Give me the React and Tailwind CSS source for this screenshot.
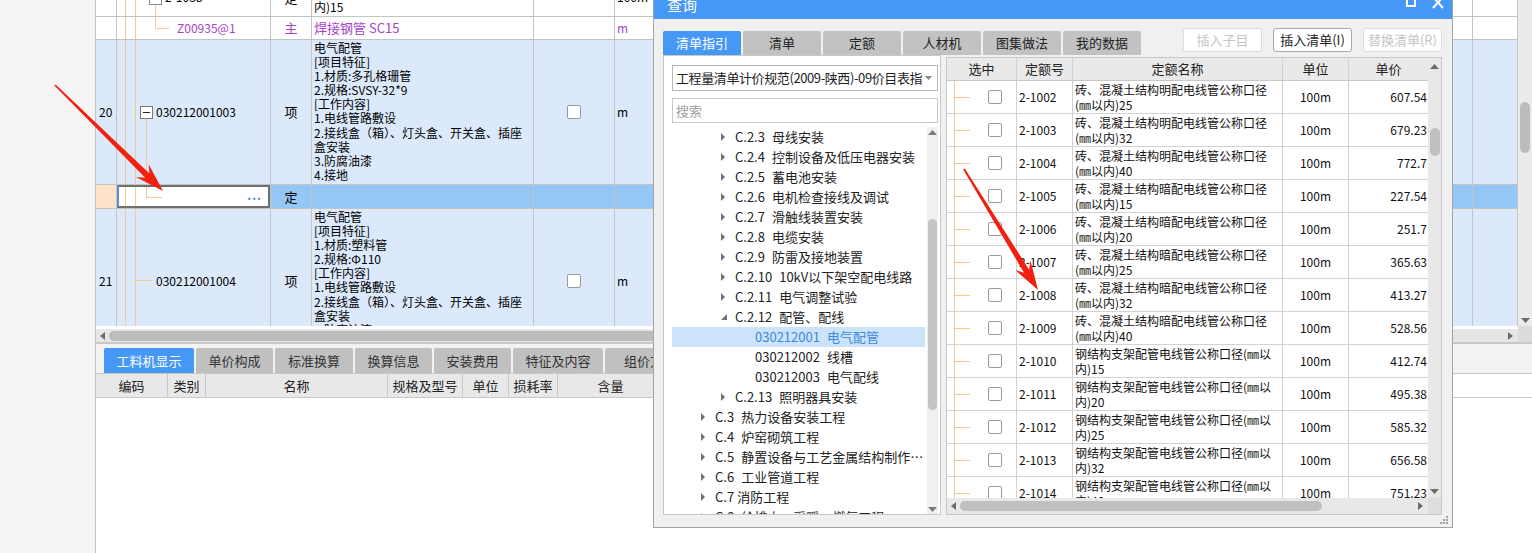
import React from "react";

const cn = "font-['Noto_Sans_CJK_SC','Liberation_Sans',sans-serif]";
const ORANGE = "#f7c98e";

const COLS = [
  "w-[21px]",
  "w-[154px]",
  "w-[41px]",
  "w-[222px]",
  "w-[81px]",
  "w-[100px]",
  "w-[758px]",
  "flex-1",
];

function GridRow({ h, bg, numBg, codeBg, cells }) {
  return (
    <div className={`flex shrink-0 border-b border-[#c4c4c4] overflow-hidden ${h} ${bg}`}>
      {COLS.map((w, i) => (
        <div
          key={i}
          className={`relative shrink-0 h-full overflow-hidden border-r border-[#c4c4c4] ${w} ${
            i === 0 && numBg ? numBg : ""
          } ${i === 1 && codeBg ? codeBg : ""}`}
        >
          {cells[i]}
        </div>
      ))}
    </div>
  );
}

const Center = ({ children, className = "" }) => (
  <div className={`h-full flex items-center justify-center ${className}`}>{children}</div>
);

const Left = ({ children, className = "" }) => (
  <div className={`h-full flex items-center whitespace-nowrap ${className}`}>{children}</div>
);

const Check = () => (
  <div className="w-[14px] h-[14px] bg-white border border-[#9a9a9a] rounded-[2px]" />
);

const Lines = ({ lines, className = "" }) => (
  <div className={`pl-[2px] whitespace-nowrap ${className}`}>
    {lines.map((l, i) => (
      <div key={i}>{l}</div>
    ))}
  </div>
);

const ROW20 = [
  "电气配管",
  "[项目特征]",
  "1.材质:多孔格珊管",
  "2.规格:SVSY-32*9",
  "[工作内容]",
  "1.电线管路敷设",
  "2.接线盒（箱）、灯头盒、开关盒、插座",
  "盒安装",
  "3.防腐油漆",
  "4.接地",
];

const ROW21 = [
  "电气配管",
  "[项目特征]",
  "1.材质:塑料管",
  "2.规格:Φ110",
  "[工作内容]",
  "1.电线管路敷设",
  "2.接线盒（箱）、灯头盒、开关盒、插座",
  "盒安装",
  "3.防腐油漆",
  "4.接地",
];

function TreeSvg({ h, children }) {
  return (
    <svg className="absolute inset-0 w-full h-full" width="154" height={h}>
      <line x1="8.5" y1="0" x2="8.5" y2={h} stroke={ORANGE} />
      <line x1="18.5" y1="0" x2="18.5" y2={h} stroke={ORANGE} />
      {children}
    </svg>
  );
}

function MainGrid() {
  return (
    <div className="h-[326px] overflow-hidden flex flex-col">
      {/* partially scrolled row */}
      <GridRow
        h="h-[17px]"
        bg="bg-white"
        cells={[
          null,
          <>
            <TreeSvg h={17}>
              <rect x="32.5" y="-8.5" width="12" height="13" fill="white" stroke="#8a8a8a" />
              <line x1="38.5" y1="5" x2="38.5" y2="17" stroke={ORANGE} />
            </TreeSvg>
            <div className="relative h-[33px] -mt-[20px] flex items-center pl-[48px]">2-1038</div>
          </>,
          <div className="h-[33px] -mt-[19px] flex items-center justify-center text-[13px]">定</div>,
          <Lines
            className="h-[33px] -mt-[17px] pt-[1px] leading-[15px]"
            lines={["钢结构支架配管电线管公称口径(㎜以", "内)15"]}
          />,
          null,
          <div className="h-[33px] -mt-[20px] flex items-center pl-[2px]">100m</div>,
          null,
          null,
        ]}
      />
      {/* main material row */}
      <GridRow
        h="h-[23px]"
        bg="bg-white"
        cells={[
          null,
          <>
            <TreeSvg h={23}>
              <path d="M38.5 0 V11.5 H52" fill="none" stroke={ORANGE} />
            </TreeSvg>
            <Left className="relative pl-[60px] text-[#a83fcb]">Z00935@1</Left>
          </>,
          <Center className="text-[#a83fcb] text-[13px]">主</Center>,
          <Left className="pl-[2px] text-[#a83fcb] text-[13px]">焊接钢管 SC15</Left>,
          null,
          <Left className="pl-[2px] text-[#a83fcb]">m</Left>,
          null,
          null,
        ]}
      />
      {/* row 20 */}
      <GridRow
        h="h-[145px]"
        bg="bg-[#dce9fb]"
        cells={[
          <Left className="pl-[3px]">20</Left>,
          <>
            <TreeSvg h={145}>
              <rect x="23.5" y="66.5" width="12" height="12" fill="white" stroke="#7a7a7a" />
              <line x1="26" y1="72.5" x2="33" y2="72.5" stroke="#222" />
              <line x1="29.5" y1="79" x2="29.5" y2="145" stroke={ORANGE} />
            </TreeSvg>
            <Left className="relative pl-[39px]">030212001003</Left>
          </>,
          <Center className="text-[13px]">项</Center>,
          <Lines className="pt-[1px] leading-[14.1px]" lines={ROW20} />,
          <Center>
            <Check />
          </Center>,
          <Left className="pl-[2px]">m</Left>,
          null,
          null,
        ]}
      />
      {/* selected / editing row */}
      <GridRow
        h="h-[24px]"
        bg="bg-[#94c7f5]"
        numBg="bg-[#fde3c8]"
        codeBg="bg-white"
        cells={[
          null,
          <>
            <TreeSvg h={24}>
              <path d="M29.5 0 V12.5 H45" fill="none" stroke={ORANGE} />
            </TreeSvg>
            <div className="relative h-full border-2 border-[#6e6e6e] border-l-[#5d8fd8] flex items-center justify-end pr-[6px]">
              <span className="text-[#3b7dd8] font-bold tracking-[1px] leading-none -mt-[4px]">...</span>
            </div>
          </>,
          <Center className="text-[13px]">定</Center>,
          null,
          null,
          null,
          null,
          null,
        ]}
      />
      {/* row 21 */}
      <GridRow
        h="h-[145px]"
        bg="bg-[#dce9fb]"
        cells={[
          <Left className="pl-[3px]">21</Left>,
          <>
            <TreeSvg h={145}>
              <line x1="18.5" y1="71.5" x2="34" y2="71.5" stroke={ORANGE} />
            </TreeSvg>
            <Left className="relative pl-[39px]">030212001004</Left>
          </>,
          <Center className="text-[13px]">项</Center>,
          <Lines className="pt-[1px] leading-[14.1px]" lines={ROW21} />,
          <Center>
            <Check />
          </Center>,
          <Left className="pl-[2px]">m</Left>,
          null,
          null,
        ]}
      />
    </div>
  );
}

const ArrowL = ({ color = "#6b6b6b" }) => (
  <svg width="5" height="8" viewBox="0 0 5 8">
    <path d="M5 0 L0 4 L5 8 Z" fill={color} />
  </svg>
);
const ArrowR = ({ color = "#6b6b6b" }) => (
  <svg width="5" height="8" viewBox="0 0 5 8">
    <path d="M0 0 L5 4 L0 8 Z" fill={color} />
  </svg>
);
const ArrowU = ({ color = "#6b6b6b" }) => (
  <svg width="9" height="5" viewBox="0 0 9 5">
    <path d="M0 5 L4.5 0 L9 5 Z" fill={color} />
  </svg>
);
const ArrowD = ({ color = "#6b6b6b" }) => (
  <svg width="9" height="5" viewBox="0 0 9 5">
    <path d="M0 0 L4.5 5 L9 0 Z" fill={color} />
  </svg>
);

function BottomPanel() {
  const tabs = ["工料机显示", "单价构成", "标准换算", "换算信息", "安装费用", "特征及内容", "组价方案"];
  const tabW = ["w-[90px]", "w-[77px]", "w-[78px]", "w-[77px]", "w-[77px]", "w-[90px]", "w-[90px]"];
  const heads = [
    ["编码", "w-[72px]"],
    ["类别", "w-[38px]"],
    ["名称", "w-[182px]"],
    ["规格及型号", "w-[75px]"],
    ["单位", "w-[46px]"],
    ["损耗率", "w-[49px]"],
    ["含量", "w-[106px]"],
    ["工程量", "w-[100px]"],
    ["预算价", "w-[100px]"],
  ];
  return (
    <div className="flex-1 flex flex-col">
      <div className="h-[32px] bg-[#f2f2f2] border-t-2 border-b border-[#c8c8c8] flex items-end pl-[8px] gap-[2px]">
        {tabs.map((t, i) => (
          <div
            key={t}
            className={`h-[25px] rounded-t-[2px] flex items-center justify-center text-[13px] shrink-0 ${tabW[i]} ${
              i === 0 ? "bg-[#4598f6] text-white" : "bg-[#c0c0c0] text-[#333]"
            }`}
          >
            {t}
          </div>
        ))}
      </div>
      <div className="h-[24px] flex border-b border-[#c8c8c8]">
        {heads.map(([t, w]) => (
          <div
            key={t}
            className={`shrink-0 bg-[#e8e8e8] border-r border-[#c8c8c8] flex items-center justify-center text-[13px] text-[#222] ${w}`}
          >
            {t}
          </div>
        ))}
        <div className="flex-1 bg-white" />
      </div>
      <div className="flex-1 bg-white" />
    </div>
  );
}

const TREE = [
  { lv: 2, code: "C.2.3", name: "母线安装" },
  { lv: 2, code: "C.2.4", name: "控制设备及低压电器安装" },
  { lv: 2, code: "C.2.5", name: "蓄电池安装" },
  { lv: 2, code: "C.2.6", name: "电机检查接线及调试" },
  { lv: 2, code: "C.2.7", name: "滑触线装置安装" },
  { lv: 2, code: "C.2.8", name: "电缆安装" },
  { lv: 2, code: "C.2.9", name: "防雷及接地装置" },
  { lv: 2, code: "C.2.10", name: "10kV以下架空配电线路" },
  { lv: 2, code: "C.2.11", name: "电气调整试验" },
  { lv: 2, code: "C.2.12", name: "配管、配线", open: true },
  { lv: 3, code: "030212001", name: "电气配管", sel: true },
  { lv: 3, code: "030212002", name: "线槽" },
  { lv: 3, code: "030212003", name: "电气配线" },
  { lv: 2, code: "C.2.13", name: "照明器具安装" },
  { lv: 1, code: "C.3", name: "热力设备安装工程" },
  { lv: 1, code: "C.4", name: "炉窑砌筑工程" },
  { lv: 1, code: "C.5", name: "静置设备与工艺金属结构制作安装工程" },
  { lv: 1, code: "C.6", name: "工业管道工程" },
  { lv: 1, code: "C.7", name: "消防工程", tight: true },
  { lv: 1, code: "C.8", name: "给排水、采暖、燃气工程" },
];

const LV_PAD = { 1: "pl-[29px]", 2: "pl-[49px]", 3: "pl-[69px]" };

function LeftPanel() {
  return (
    <div className="w-[278px] bg-white border border-[#c8c8c8] flex flex-col pl-[8px] pr-[2px] shrink-0">
      <div className="mt-[9px] h-[26px] border border-[#b8b8b8] flex items-center pl-[3px] pr-[5px] text-[13px] text-[#222]">
        <div className="flex-1 overflow-hidden whitespace-nowrap tracking-[-0.4px]">
          工程量清单计价规范(2009-陕西)-09价目表指引
        </div>
        <svg width="7" height="4" className="ml-[2px] shrink-0">
          <path d="M0 0 L3.5 4 L7 0 Z" fill="#8a8a8a" />
        </svg>
      </div>
      <div className="mt-[7px] h-[25px] border border-[#c8c8c8] flex items-center pl-[3px] text-[13px] text-[#a0a0a0]">
        搜索
      </div>
      <div className="mt-[4px] flex-1 flex min-h-0">
        <div className="flex-1 overflow-hidden pr-[2px] text-[13px] text-[#222]">
          {TREE.map((t) => (
            <div
              key={t.code}
              className={`h-[20px] flex items-center whitespace-nowrap ${LV_PAD[t.lv]} ${
                t.sel ? "bg-[#cce4f9] text-[#3d87e0]" : ""
              }`}
            >
              <div className="w-[14px] shrink-0 flex items-center">
                {t.lv < 3 &&
                  (t.open ? (
                    <svg width="6" height="6">
                      <path d="M6 0 L6 6 L0 6 Z" fill="#707070" />
                    </svg>
                  ) : (
                    <svg width="4" height="8">
                      <path d="M0 0 L4 4 L0 8 Z" fill="#707070" />
                    </svg>
                  ))}
              </div>
              <span>{t.code}</span>
              <span className={`${t.tight ? "ml-[3px]" : "ml-[7px]"} truncate`}>{t.name}</span>
            </div>
          ))}
        </div>
        <div className="w-[11px] bg-[#f0f0f0] flex flex-col items-center">
          <div className="mt-[3px]">
            <ArrowU color="#7a7a7a" />
          </div>
          <div className="mt-[84px] w-[9px] h-[191px] rounded-full bg-[#c4c4c4]" />
          <div className="flex-1" />
          <div className="mb-[2px]">
            <ArrowD color="#7a7a7a" />
          </div>
        </div>
      </div>
    </div>
  );
}

const QUOTA = [
  ["2-1002", "砖、混凝土结构明配电线管公称口径", "(㎜以内)25", "607.54"],
  ["2-1003", "砖、混凝土结构明配电线管公称口径", "(㎜以内)32", "679.23"],
  ["2-1004", "砖、混凝土结构明配电线管公称口径", "(㎜以内)40", "772.7"],
  ["2-1005", "砖、混凝土结构暗配电线管公称口径", "(㎜以内)15", "227.54"],
  ["2-1006", "砖、混凝土结构暗配电线管公称口径", "(㎜以内)20", "251.7"],
  ["2-1007", "砖、混凝土结构暗配电线管公称口径", "(㎜以内)25", "365.63"],
  ["2-1008", "砖、混凝土结构暗配电线管公称口径", "(㎜以内)32", "413.27"],
  ["2-1009", "砖、混凝土结构暗配电线管公称口径", "(㎜以内)40", "528.56"],
  ["2-1010", "钢结构支架配管电线管公称口径(㎜以", "内)15", "412.74"],
  ["2-1011", "钢结构支架配管电线管公称口径(㎜以", "内)20", "495.38"],
  ["2-1012", "钢结构支架配管电线管公称口径(㎜以", "内)25", "585.32"],
  ["2-1013", "钢结构支架配管电线管公称口径(㎜以", "内)32", "656.58"],
  ["2-1014", "钢结构支架配管电线管公称口径(㎜以", "内)40", "751.23"],
];

function RightTable() {
  const cell = "shrink-0 h-full border-r border-[#d2d2d2]";
  return (
    <div className="w-[496px] h-[458px] mt-[2px] bg-white border border-[#c8c8c8] flex flex-col shrink-0">
      <div className="flex-1 flex min-h-0">
        <div className="flex-1 flex flex-col overflow-hidden text-[12px] text-[#111]">
          <div className="h-[23px] shrink-0 flex bg-[#e9e9e9] border-b border-[#c8c8c8] text-[13px] text-[#222]">
            <div className={`${cell} w-[70px] flex items-center justify-center border-[#c8c8c8]`}>选中</div>
            <div className={`${cell} w-[56px] flex items-center justify-center border-[#c8c8c8]`}>定额号</div>
            <div className={`${cell} w-[210px] flex items-center justify-center border-[#c8c8c8]`}>定额名称</div>
            <div className={`${cell} w-[66px] flex items-center justify-center border-[#c8c8c8]`}>单位</div>
            <div className="flex-1 flex items-center justify-center">单价</div>
          </div>
          {QUOTA.map(([no, l1, l2, price]) => (
            <div key={no} className="h-[33px] shrink-0 flex border-b border-[#d2d2d2]">
              <div className={`${cell} w-[70px] relative flex items-center pl-[41px]`}>
                <svg className="absolute inset-0" width="70" height="33">
                  <line x1="7.5" y1="0" x2="7.5" y2="33" stroke={ORANGE} />
                  <line x1="7.5" y1="16.5" x2="23" y2="16.5" stroke={ORANGE} />
                </svg>
                <Check />
              </div>
              <div className={`${cell} w-[56px] flex items-center pl-[2px]`}>{no}</div>
              <div className={`${cell} w-[210px] pl-[2px] pt-[1px] leading-[15px] whitespace-nowrap overflow-hidden`}>
                <div>{l1}</div>
                <div>{l2}</div>
              </div>
              <div className={`${cell} w-[66px] flex items-center justify-center`}>100m</div>
              <div className="flex-1 flex items-center justify-end pr-[1px]">{price}</div>
            </div>
          ))}
        </div>
        <div className="w-[13px] bg-[#e8e8e8] flex flex-col items-center">
          <div className="mt-[6px]">
            <ArrowU />
          </div>
          <div className="mt-[59px] w-[10px] h-[28px] rounded-full bg-[#c0c0c0]" />
          <div className="flex-1" />
          <div className="mb-[4px]">
            <ArrowD />
          </div>
        </div>
      </div>
      <div className="h-[16px] shrink-0 bg-[#e8e8e8] flex items-center">
        <div className="ml-[4px]">
          <ArrowL />
        </div>
        <div className="ml-[4px] w-[362px] h-[10px] rounded-full bg-[#c0c0c0]" />
        <div className="flex-1" />
        <div className="mr-[5px]">
          <ArrowR />
        </div>
        <div className="w-[13px] h-full bg-[#dedede]" />
      </div>
    </div>
  );
}

function Dialog() {
  const tabs = ["清单指引", "清单", "定额", "人材机", "图集做法", "我的数据"];
  return (
    <div className="absolute left-[653px] top-0 w-[800px] h-[528px] bg-[#f0f0f0] border-x border-b border-[#a4a4a4] flex flex-col">
      <div className="h-[19px] shrink-0 bg-[#4598f6] flex justify-between">
        <span className="ml-[13px] -mt-[3px] text-[15px] leading-[16px] text-white">查询</span>
        <div className="flex gap-[16px] mr-[8px]">
          <svg width="10" height="8">
            <rect x="1" y="-3" width="8" height="9" fill="none" stroke="white" strokeWidth="2" />
          </svg>
          <svg width="12" height="9">
            <path d="M1 -3 L11 8 M11 -3 L1 8" stroke="white" strokeWidth="2" />
          </svg>
        </div>
      </div>
      <div className="h-[36px] shrink-0 flex items-end justify-between pl-[9px] pr-[10px]">
        <div className="flex gap-[2px]">
          {tabs.map((t, i) => (
            <div
              key={t}
              className={`w-[78px] h-[24px] rounded-t-[2px] flex items-center justify-center text-[13px] ${
                i === 0 ? "bg-[#4598f6] text-white" : "bg-[#c2c2c2] text-[#222]"
              }`}
            >
              {t}
            </div>
          ))}
        </div>
        <div className="flex gap-[11px] mb-[3px]">
          <div className="w-[79px] h-[24px] bg-white border border-[#dcdcdc] rounded-[3px] flex items-center justify-center text-[13px] text-[#c4c4c4]">
            插入子目
          </div>
          <div className="w-[79px] h-[24px] bg-white border border-[#a8a8a8] rounded-[3px] flex items-center justify-center text-[13px] text-[#222]">
            插入清单(I)
          </div>
          <div className="w-[79px] h-[24px] bg-white border border-[#dcdcdc] rounded-[3px] flex items-center justify-center text-[13px] text-[#c4c4c4]">
            替换清单(R)
          </div>
        </div>
      </div>
      <div className="h-[460px] shrink-0 flex pl-[9px] gap-[5px]">
        <LeftPanel />
        <RightTable />
      </div>
      <div className="flex-1 flex justify-end items-end pr-[4px] pb-[3px]">
        <svg width="9" height="9">
          <g fill="#a0a0a0">
            <rect x="7" y="1" width="2" height="2" />
            <rect x="4" y="4" width="2" height="2" />
            <rect x="7" y="4" width="2" height="2" />
            <rect x="1" y="7" width="2" height="2" />
            <rect x="4" y="7" width="2" height="2" />
            <rect x="7" y="7" width="2" height="2" />
          </g>
        </svg>
      </div>
    </div>
  );
}

function arrowPoints(x1, y1, x2, y2, head = 26, hw = 9, sw = 3, tw = 0.9) {
  const dx = x2 - x1;
  const dy = y2 - y1;
  const len = Math.hypot(dx, dy);
  const ux = dx / len;
  const uy = dy / len;
  const nx = -uy;
  const ny = ux;
  const bx = x2 - ux * head;
  const by = y2 - uy * head;
  const pts = [
    [x1 + nx * tw, y1 + ny * tw],
    [bx + ux * 4 + nx * sw, by + uy * 4 + ny * sw],
    [bx - ux * 3 + nx * hw, by - uy * 3 + ny * hw],
    [x2, y2],
    [bx - ux * 3 - nx * hw, by - uy * 3 - ny * hw],
    [bx + ux * 4 - nx * sw, by + uy * 4 - ny * sw],
    [x1 - nx * tw, y1 - ny * tw],
  ];
  return pts.map((p) => p.map((v) => v.toFixed(1)).join(",")).join(" ");
}

function Arrows() {
  return (
    <svg className="absolute inset-0 pointer-events-none" width="1532" height="553">
      <polygon points={arrowPoints(55, 85, 163, 191)} fill="#f2200f" />
      <polygon points={arrowPoints(964, 169, 1038, 290)} fill="#f2200f" />
    </svg>
  );
}

export default function App() {
  return (
    <div className={`relative w-[1532px] h-[553px] overflow-hidden bg-white flex ${cn} text-[12px] text-black`}>
      <div className="w-[96px] shrink-0 bg-[#f4f4f4] border-r border-[#c4c4c4]" />
      <div className="flex-1 flex flex-col min-w-0">
        <div className="h-[342px] shrink-0 flex">
          <div className="flex-1 flex flex-col min-w-0">
            <MainGrid />
            <div className="h-[16px] border-t-[3px] border-white bg-[#e6e6e6] flex items-center">
              <div className="ml-[4px]">
                <ArrowL />
              </div>
              <div className="ml-[4px] w-[900px] h-[10px] rounded-full bg-[#bdbdbd]" />
              <div className="flex-1" />
              <div className="mr-[5px]">
                <ArrowR />
              </div>
            </div>
          </div>
          <div className="w-[14px] shrink-0 flex flex-col">
            <div className="h-[326px] bg-[#ebebeb] flex flex-col items-center">
              <div className="mt-[102px] w-[10px] h-[51px] rounded-full bg-[#bcbcbc]" />
              <div className="flex-1" />
              <div className="mb-[3px]">
                <ArrowD />
              </div>
            </div>
            <div className="h-[16px] bg-[#dcdcdc]" />
          </div>
        </div>
        <BottomPanel />
      </div>
      <Dialog />
      <Arrows />
    </div>
  );
}
